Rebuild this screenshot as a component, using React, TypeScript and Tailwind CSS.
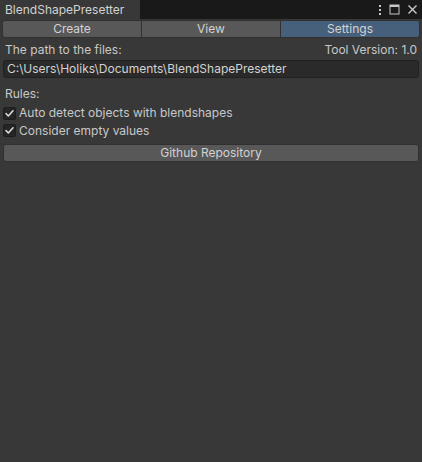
import React from "react";

function Check() {
  return (
    <div className="w-[13px] h-[13px] rounded-[2px] bg-[#252525] border border-[#1d1d1d] flex items-center justify-center">
      <svg width="11" height="11" viewBox="0 0 11 11">
        <path d="M2 5.6 L4.3 8 L9 2.8" stroke="#e0e0e0" strokeWidth="1.5" fill="none" strokeLinecap="round" strokeLinejoin="round" />
      </svg>
    </div>
  );
}

export default function App() {
  return (
    <div className="w-[422px] h-[462px] bg-[#383838] flex flex-col text-[12px] text-[#c8c8c8]" style={{ fontFamily: "Inter, 'Noto Sans', sans-serif" }}>
      <div className="h-[19px] bg-[#191919] flex items-stretch">
        <div className="w-[140px] bg-[#383838] flex items-center pl-[5px] text-[#d2d2d2]">BlendShapePresetter</div>
        <div className="flex-1 flex items-center justify-end gap-[7px] pr-[4px]">
          <svg width="4" height="11" viewBox="0 0 4 11">
            <rect x="1" y="1" width="2" height="2" fill="#c8c8c8" />
            <rect x="1" y="5" width="2" height="2" fill="#c8c8c8" />
            <rect x="1" y="9" width="2" height="2" fill="#c8c8c8" />
          </svg>
          <svg width="11" height="11" viewBox="0 0 11 11">
            <rect x="1" y="1" width="9" height="9" fill="none" stroke="#c8c8c8" strokeWidth="1" />
            <rect x="1" y="1" width="9" height="2" fill="#c8c8c8" />
          </svg>
          <svg width="11" height="11" viewBox="0 0 11 11">
            <path d="M1.5 1.5 L9.5 9.5 M9.5 1.5 L1.5 9.5" stroke="#c8c8c8" strokeWidth="1.4" />
          </svg>
        </div>
      </div>
      <div className="flex px-[2px] pt-[1px] h-[19px]">
        <div className="flex-1 bg-[#585858] border border-[#303030] rounded-l-[3px] flex items-center justify-center text-[#d2d2d2]">Create</div>
        <div className="flex-1 bg-[#585858] border border-[#303030] border-l-0 flex items-center justify-center text-[#d2d2d2]">View</div>
        <div className="flex-1 bg-[#46607c] border border-[#303030] border-l-0 rounded-r-[3px] flex items-center justify-center text-[#d2d2d2]">Settings</div>
      </div>
      <div className="flex justify-between px-[5px] mt-[3px] h-[18px] items-center">
        <span>The path to the files:</span>
        <span>Tool Version: 1.0</span>
      </div>
      <div className="mx-[3px] mt-[1px] h-[18px] bg-[#2a2a2a] border border-[#212121] rounded-[3px] flex items-center pl-[3px] text-[#d2d2d2]">
        C:\Users\Holiks\Documents\BlendShapePresetter
      </div>
      <div className="px-[5px] mt-[7px] h-[18px] flex items-center">Rules:</div>
      <div className="pl-[3px] mt-[1px] h-[18px] flex items-center gap-[3px]">
        <Check />
        <span>Auto detect objects with blendshapes</span>
      </div>
      <div className="pl-[3px] h-[17px] flex items-center gap-[3px]">
        <Check />
        <span>Consider empty values</span>
      </div>
      <div className="mx-[3px] mt-[5px] h-[18px] bg-[#585858] border border-[#303030] rounded-[3px] flex items-center justify-center text-[#d2d2d2]">
        Github Repository
      </div>
    </div>
  );
}
